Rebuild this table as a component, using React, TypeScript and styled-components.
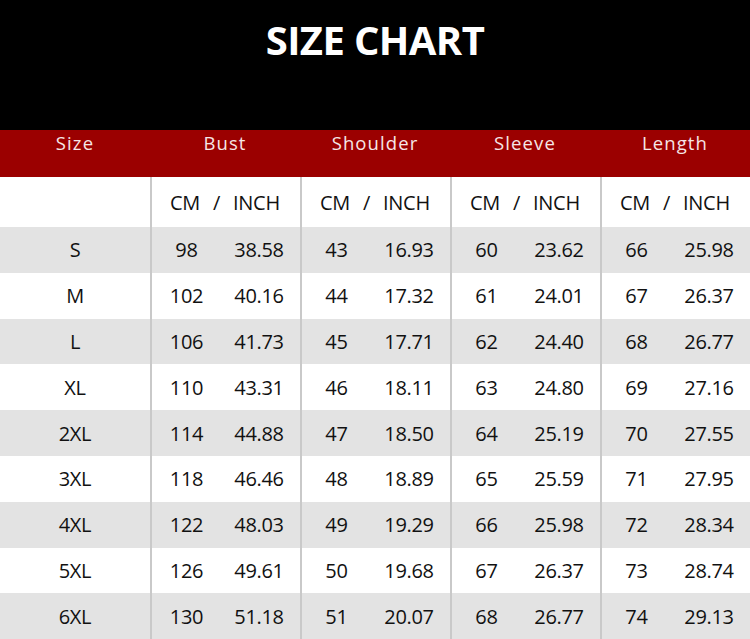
import React from 'react'
import styled, { createGlobalStyle } from 'styled-components'

const GlobalStyle = createGlobalStyle`
  html, body {
    margin: 0;
    padding: 0;
    background: #ffffff;
  }
  body {
    font-family: 'Open Sans', 'Noto Sans', sans-serif;
  }
`

const Page = styled.div`
  width: 750px;
  height: 639px;
  overflow: hidden;
  background: #ffffff;
`

const TitleBar = styled.div`
  height: 130px;
  background: #000000;
  display: flex;
  justify-content: center;
  padding-top: 12px;
  box-sizing: border-box;
`

const Title = styled.h1`
  margin: 0;
  color: #ffffff;
  font-size: 40px;
  line-height: 56px;
  font-weight: 700;
  letter-spacing: -0.6px;
`

const HeadBand = styled.div`
  height: 47px;
  background: #9b0000;
  display: grid;
  grid-template-columns: repeat(5, 150px);
`

const HeadCell = styled.div`
  color: #f6e6e6;
  font-size: 18.5px;
  letter-spacing: 1.1px;
  line-height: 26px;
  text-align: center;
`

const Table = styled.div`
  display: grid;
  grid-template-columns: repeat(5, 150px);
  grid-template-rows: 50px repeat(9, 45.8px);
`

const Cell = styled.div<{ $shade?: boolean; $divided?: boolean }>`
  background: ${p => (p.$shade ? '#e3e3e3' : '#ffffff')};
  border-left: ${p => (p.$divided ? '2px solid #c9c9c9' : 'none')};
  box-sizing: border-box;
  display: flex;
  align-items: center;
  justify-content: ${p => (p.$divided ? 'flex-start' : 'center')};
  color: #111111;
  font-size: 20px;
  letter-spacing: -0.3px;
`

const Part = styled.span<{ $w: number }>`
  width: ${p => p.$w}px;
  text-align: center;
  flex: none;
`

const Unit = styled.span`
  display: flex;
  align-items: center;
  width: 100%;
  padding-left: 18px;
  gap: 13px;
`

type Row = [string, string, string, string, string, string, string, string, string]

const rows: Row[] = [
  ['S', '98', '38.58', '43', '16.93', '60', '23.62', '66', '25.98'],
  ['M', '102', '40.16', '44', '17.32', '61', '24.01', '67', '26.37'],
  ['L', '106', '41.73', '45', '17.71', '62', '24.40', '68', '26.77'],
  ['XL', '110', '43.31', '46', '18.11', '63', '24.80', '69', '27.16'],
  ['2XL', '114', '44.88', '47', '18.50', '64', '25.19', '70', '27.55'],
  ['3XL', '118', '46.46', '48', '18.89', '65', '25.59', '71', '27.95'],
  ['4XL', '122', '48.03', '49', '19.29', '66', '25.98', '72', '28.34'],
  ['5XL', '126', '49.61', '50', '19.68', '67', '26.37', '73', '28.74'],
  ['6XL', '130', '51.18', '51', '20.07', '68', '26.77', '74', '29.13'],
]

const heads = ['Size', 'Bust', 'Shoulder', 'Sleeve', 'Length']

const App = () => (
  <Page>
    <GlobalStyle />
    <TitleBar>
      <Title>SIZE CHART</Title>
    </TitleBar>
    <HeadBand>
      {heads.map(h => (
        <HeadCell key={h}>{h}</HeadCell>
      ))}
    </HeadBand>
    <Table>
      <Cell />
      {[0, 1, 2, 3].map(i => (
        <Cell key={i} $divided>
          <Unit>
            <span>CM</span>
            <span>/</span>
            <span>INCH</span>
          </Unit>
        </Cell>
      ))}
      {rows.map((row, r) => {
        const shade = r % 2 === 0
        return (
          <React.Fragment key={row[0]}>
            <Cell $shade={shade}>{row[0]}</Cell>
            {[0, 1, 2, 3].map(c => (
              <Cell key={c} $shade={shade} $divided>
                <Part $w={69}>{row[1 + c * 2]}</Part>
                <Part $w={76}>{row[2 + c * 2]}</Part>
              </Cell>
            ))}
          </React.Fragment>
        )
      })}
    </Table>
  </Page>
)

export default App
